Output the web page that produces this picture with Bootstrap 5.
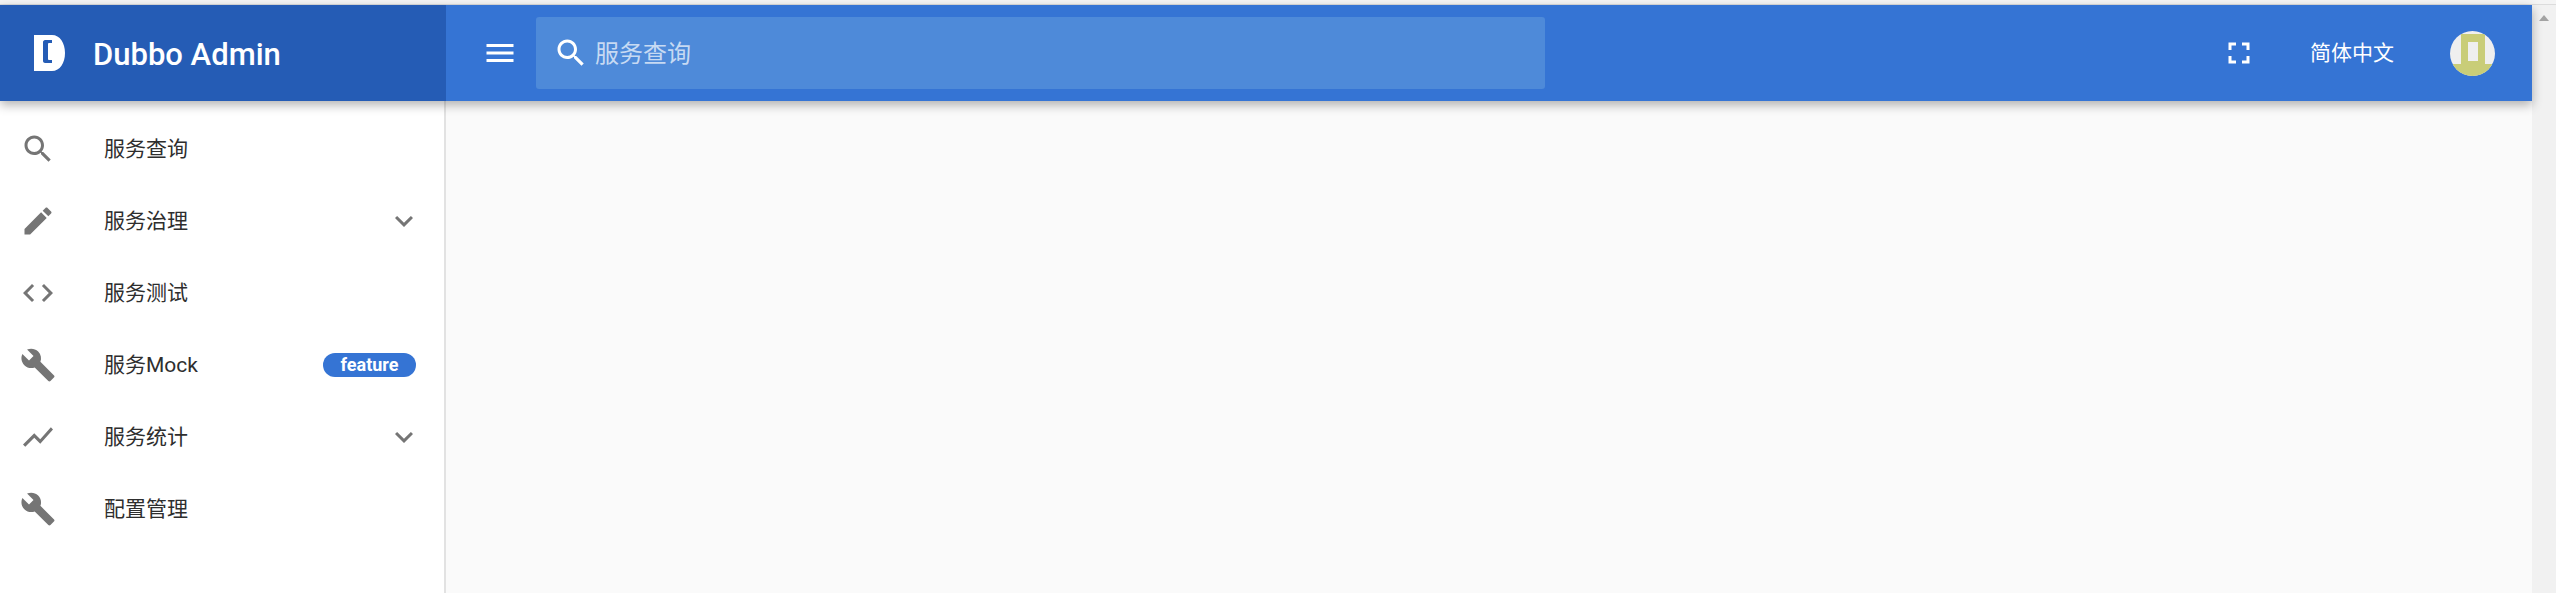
<!DOCTYPE html>
<html lang="zh-CN">
<head>
    <meta charset="UTF-8">
    <title>Dubbo Admin</title>
    <link href="https://cdn.jsdelivr.net/npm/bootstrap@5.3.3/dist/css/bootstrap.min.css" rel="stylesheet">
    <style>
        html, body { height: 100%; overflow: hidden; }
        body { font-family: Roboto, "Noto Sans CJK SC", sans-serif; background: #fafafa; }
        .top-strip { height: 5px; background: #f4f4f4; border-bottom: 1px solid #dcdcdc; }
        .page-wrap { height: 588px; }
        .page-left { width: 2532px; }
        .fake-scroll { width: 24px; background: #f1f1f1; padding: 10px 7px 0; }
        .scroll-arrow { width: 0; height: 0; border-left: 5.5px solid transparent; border-right: 5.5px solid transparent; border-bottom: 6px solid #a3a3a3; }
        .app-bar { height: 96px; background: #3574d4; box-shadow: 0 4px 10px rgba(0,0,0,.3); position: relative; z-index: 2; padding: 0; flex-wrap: nowrap; justify-content: flex-start; }
        .brand-box { width: 446px; height: 96px; background: #255cb5; padding-left: 34px; gap: 28px; color: #fff; }
        .brand-name { font-size: 31px; font-weight: 500; line-height: 1; white-space: nowrap; padding-top: 2px; }
        .menu-btn { width: 36px; margin-left: 36px; margin-right: 18px; color: #fff; }
        .search-box { width: 1009px; height: 72px; background: #4e8ad9; border-radius: 3px; padding-left: 17px; gap: 6px; }
        .search-ph { font-size: 24px; color: rgba(255,255,255,.7); padding-top: 1px; }
        .bar-right { margin-left: auto; color: #fff; padding-right: 37px; }
        .lang-txt { font-size: 21px; margin-left: 53px; margin-right: 56px; padding-top: 1px; }
        .side-col { width: 446px; height: 492px; background: #fff; border-right: 2px solid #e2e2e2; padding-top: 12px; }
        .side-row.list-group-item { height: 72px; padding: 0 22px 0 20px; border: 0; background: transparent; color: #333; font-size: 21px; display: flex; align-items: center; }
        .side-row svg { fill: #757575; flex: none; }
        .side-label { margin-left: 48px; color: #2e2e2e; padding-top: 2px; }
        .side-end { margin-left: auto; }
        .feat-pill { margin-left: auto; margin-right: 6px; width: 93px; height: 24px; padding: 0; background: #3574d4; color: #fff; font-size: 18px; font-weight: 700; line-height: 24px; border-radius: 12px; }
        .main-area { background: #fafafa; }
        .ic-white { fill: #fff; }
    </style>
</head>
<body>
<div class="top-strip"></div>
<div class="d-flex page-wrap">
    <div class="page-left d-flex flex-column">
        <!-- 상단 바 -->
        <nav class="navbar app-bar d-flex align-items-center">
            <div class="brand-box d-flex align-items-center">
                <svg width="31" height="36" viewBox="0 0 31 36"><path class="ic-white" fill-rule="evenodd" d="M0 0H18C26 0 31 8 31 18S26 36 18 36H0ZM11 5H18V8H15C14.5 8 14 8.5 14 9V24C14 24.5 14.500 25 15 25H18V28H11C10 28 9 27 9 26V7C9 6 10 5 11 5Z"/></svg>
                <span class="brand-name">Dubbo Admin</span>
            </div>
            <div class="menu-btn d-flex">
                <svg width="36" height="36" viewBox="0 0 24 24"><path class="ic-white" d="M3 18h18v-2H3v2zm0-5h18v-2H3v2zm0-7v2h18V6H3z"/></svg>
            </div>
            <div class="search-box d-flex align-items-center">
                <svg width="36" height="36" viewBox="0 0 24 24"><path class="ic-white" d="M15.5 14h-.79l-.28-.27C15.41 12.59 16 11.11 16 9.5 16 5.91 13.09 3 9.5 3S3 5.91 3 9.5 5.91 16 9.5 16c1.61 0 3.09-.59 4.23-1.57l.27.28v.79l5 4.99L20.49 19l-4.99-5zm-6 0C7.01 14 5 11.99 5 9.5S7.01 5 9.5 5 14 7.01 14 9.5 11.99 14 9.5 14z"/></svg>
                <span class="search-ph">服务查询</span>
            </div>
            <div class="bar-right d-flex align-items-center">
                <svg width="36" height="36" viewBox="0 0 24 24"><path class="ic-white" d="M7 14H5v5h5v-2H7v-3zm-2-4h2V7h3V5H5v5zm12 7h-3v2h5v-5h-2v3zM14 5v2h3v3h2V5h-5z"/></svg>
                <span class="lang-txt">简体中文</span>
                <svg width="45" height="45" viewBox="0 0 45 45">
                    <defs><clipPath id="avatarClip"><circle cx="22.500" cy="22.500" r="22.500"/></clipPath></defs>
                    <g clip-path="url(#avatarClip)">
                        <rect width="45" height="45" fill="#efefef"/>
                        <path fill="#c9cd78" fill-rule="evenodd" d="M11 3H35V33H45V45H0V33H11ZM18 11V30H28V11Z"/>
                    </g>
                </svg>
            </div>
        </nav>

        <div class="d-flex flex-grow-1">
            <!-- 사이드 메뉴 -->
            <div class="side-col list-group list-group-flush rounded-0">
                <div class="side-row list-group-item">
                    <svg width="36" height="36" viewBox="0 0 24 24"><path d="M15.5 14h-.79l-.28-.27C15.41 12.59 16 11.11 16 9.5 16 5.91 13.09 3 9.5 3S3 5.91 3 9.5 5.91 16 9.5 16c1.61 0 3.09-.59 4.23-1.57l.27.28v.79l5 4.99L20.49 19l-4.99-5zm-6 0C7.01 14 5 11.99 5 9.5S7.01 5 9.5 5 14 7.01 14 9.5 11.99 14 9.5 14z"/></svg>
                    <span class="side-label">服务查询</span>
                </div>
                <div class="side-row list-group-item">
                    <svg width="36" height="36" viewBox="0 0 24 24"><path d="M3 17.25V21h3.75L17.81 9.94l-3.75-3.75L3 17.25zM20.71 7.04c.39-.39.39-1.02 0-1.41l-2.34-2.34c-.39-.39-1.02-.39-1.41 0l-1.83 1.83 3.75 3.75 1.83-1.83z"/></svg>
                    <span class="side-label">服务治理</span>
                    <svg class="side-end" width="36" height="36" viewBox="0 0 24 24"><path d="M16.59 8.59L12 13.17 7.41 8.59 6 10l6 6 6-6z"/></svg>
                </div>
                <div class="side-row list-group-item">
                    <svg width="36" height="36" viewBox="0 0 24 24"><path d="M9.4 16.6L4.8 12l4.6-4.6L8 6l-6 6 6 6 1.4-1.4zm5.2 0l4.6-4.6-4.6-4.6L16 6l6 6-6 6-1.4-1.4z"/></svg>
                    <span class="side-label">服务测试</span>
                </div>
                <div class="side-row list-group-item">
                    <svg width="36" height="36" viewBox="0 0 24 24"><path d="M22.7 19l-9.1-9.1c.9-2.3.4-5-1.5-6.9-2-2-5-2.4-7.4-1.3L9 6 6 9 1.6 4.7C.4 7.1.9 10.1 2.9 12.1c1.9 1.9 4.6 2.4 6.9 1.5l9.1 9.1c.4.4 1 .4 1.4 0l2.3-2.3c.5-.4.5-1.1.1-1.4z"/></svg>
                    <span class="side-label">服务Mock</span>
                    <span class="badge feat-pill">feature</span>
                </div>
                <div class="side-row list-group-item">
                    <svg width="36" height="36" viewBox="0 0 24 24"><path d="M3.5 18.49l6-6.01 4 4L22 6.92l-1.41-1.41-7.09 7.97-4-4L2 16.99z"/></svg>
                    <span class="side-label">服务统计</span>
                    <svg class="side-end" width="36" height="36" viewBox="0 0 24 24"><path d="M16.59 8.59L12 13.17 7.41 8.59 6 10l6 6 6-6z"/></svg>
                </div>
                <div class="side-row list-group-item">
                    <svg width="36" height="36" viewBox="0 0 24 24"><path d="M22.7 19l-9.1-9.1c.9-2.3.4-5-1.5-6.9-2-2-5-2.4-7.4-1.3L9 6 6 9 1.6 4.7C.4 7.1.9 10.1 2.9 12.1c1.9 1.9 4.6 2.4 6.9 1.5l9.1 9.1c.4.4 1 .4 1.4 0l2.3-2.3c.5-.4.5-1.1.1-1.4z"/></svg>
                    <span class="side-label">配置管理</span>
                </div>
            </div>
            <div class="main-area flex-grow-1"></div>
        </div>
    </div>
    <div class="fake-scroll"><div class="scroll-arrow"></div></div>
</div>
<script src="https://cdn.jsdelivr.net/npm/bootstrap@5.3.3/dist/js/bootstrap.bundle.min.js"></script>
</body>
</html>
